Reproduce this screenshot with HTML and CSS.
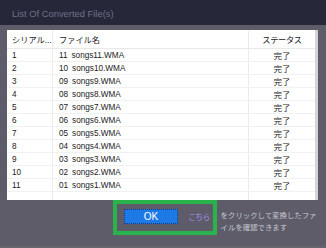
FILE: index.html
```html
<!DOCTYPE html>
<html lang="ja">
<head>
  <meta charset="UTF-8">
  <meta name="viewport" content="width=device-width, initial-scale=1.0">
  <title>List Of Converted File(s)</title>
  <link rel="stylesheet" href="styles.css">
</head>
<body>
  <div class="dialog">
    <div class="titlebar">List Of Converted File(s)</div>
    <div class="panel">
      <table class="files">
        <thead>
          <tr>
            <th class="col-no">シリアル...</th>
            <th class="col-name">ファイル名</th>
            <th class="col-status">ステータス</th>
          </tr>
        </thead>
        <tbody id="rows"></tbody>
      </table>
    </div>
    <div class="footer">
      <div class="highlight">
        <button class="ok">OK</button>
        <a class="link" href="#">こちら</a>
      </div>
      <div class="hint">をクリックして変換したファ<br>イルを確認できます</div>
    </div>
  </div>
  <script>
    const rows = document.getElementById('rows');
    for (let i = 1; i <= 11; i++) {
      const n = 12 - i;
      const num = String(n).padStart(2, '0');
      const tr = document.createElement('tr');
      tr.innerHTML = `<td class="col-no">${i}</td>` +
        `<td class="col-name"><span class="idx">${num}</span>songs${n}.WMA</td>` +
        `<td class="col-status">完了</td>`;
      rows.appendChild(tr);
    }
    const filler = document.createElement('tr');
    filler.className = 'filler';
    filler.innerHTML = '<td class="col-no"></td><td class="col-name"></td><td class="col-status"></td>';
    rows.appendChild(filler);
  </script>
</body>
</html>
```
FILE: styles.css
```css
body {
  margin: 0;
  font-family: "Liberation Sans", "Noto Sans CJK JP", sans-serif;
}
.dialog {
  width: 326px;
  height: 248px;
  background-color: #5d5c68;
  box-sizing: border-box;
  border-bottom: 2px solid #66656f;
  overflow: hidden;
}
.titlebar {
  height: 25px;
  background-color: #27273a;
  color: #707088;
  font-size: 9.4px;
  line-height: 27px;
  padding-left: 12px;
}
.panel {
  margin: 5px 0 0 7px;
  width: 308px;
  height: 170px;
  background-color: #fff;
  border-right: 3px solid #d4d4d8;
  overflow: hidden;
}
.files {
  width: 100%;
  border-collapse: collapse;
  font-size: 8.2px;
  color: #1a1a1a;
}
.files th {
  height: 18px;
  font-weight: normal;
  text-align: left;
  border-bottom: 1px solid #e8e8e8;
  padding: 0;
}
.files td {
  height: 11.6px;
  padding: 0;
  border-bottom: 1px solid #f1f1f1;
}
.files tr > :nth-child(2) {
  border-left: 1px solid #ececec;
  border-right: 1px solid #ececec;
}
.col-no {
  width: 40px;
  padding-left: 5px !important;
}
.col-name {
  padding-left: 6px !important;
}
.col-status {
  width: 66px;
  text-align: center !important;
}
th.col-status {
  letter-spacing: -0.3px;
}
.idx {
  margin-right: 4px;
}
.files tr.filler td {
  border-bottom: none;
  height: 11px;
}
.footer {
  display: flex;
  align-items: flex-start;
  padding: 0 0 0 113px;
}
.highlight {
  display: flex;
  align-items: center;
  border: 4px solid #2ab24c;
  padding: 5px 3px 7px 7px;
}
.ok {
  width: 54px;
  height: 15px;
  background-color: #1c79e6;
  color: #fff;
  font-family: "Liberation Sans", sans-serif;
  font-size: 10px;
  border: 1px dotted #173a78;
  padding: 0;
}
.link {
  margin-left: 10px;
  color: #a68ef5;
  font-size: 7.8px;
  text-decoration: none;
  letter-spacing: -0.6px;
}
.hint {
  margin: 10px 0 0 4px;
  color: #c8c8d2;
  font-size: 7.4px;
  line-height: 12px;
  white-space: nowrap;
}
```
